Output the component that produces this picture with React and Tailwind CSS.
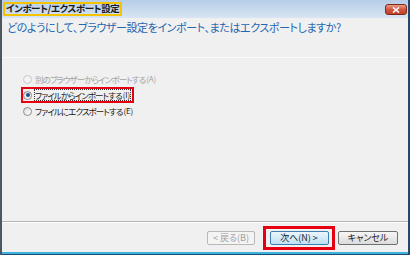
import React from 'react';

const jp = "font-['Noto_Sans_CJK_JP','Noto_Sans',sans-serif] [font-feature-settings:'palt']";

function Radio({ checked, disabled }) {
  return (
    <span
      className={`flex h-[9px] w-[9px] shrink-0 items-center justify-center rounded-full border ${
        disabled
          ? 'border-[#c8c8c8] bg-[#f4f4f4]'
          : 'border-[#8a8a8a] bg-gradient-to-br from-[#dcdcdc] to-[#ffffff]'
      }`}
    >
      {checked && <span className="h-[4px] w-[4px] rounded-full bg-[#1f4f86]" />}
    </span>
  );
}

function Option({ label, keyHint, checked, disabled, highlight }) {
  return (
    <div className="flex h-[16px] items-center">
      <div
        className={`flex h-[16px] items-center gap-[2px] border-2 pr-[1px] ${
          highlight ? 'border-[#e60012]' : 'border-transparent'
        }`}
      >
        <Radio checked={checked} disabled={disabled} />
        <span
          className={`flex items-center text-[8.5px] leading-[10px] ${
            disabled ? 'text-[#a3a3a3]' : 'text-[#1a1a1a]'
          } ${highlight ? 'border border-dotted border-[#333]' : 'border border-transparent'}`}
        >
          <span className="tracking-[-0.9px]">{label}</span>
          <span className="ml-[1px] text-[8px] tracking-[-0.2px]">({keyHint})</span>
        </span>
      </div>
    </div>
  );
}

export default function App() {
  return (
    <div
      className={`flex h-[255px] w-[410px] flex-col overflow-hidden border-l-2 border-r-2 border-l-[#4d5762] border-r-[#27486a] bg-[#f0f0f0] ${jp}`}
    >
      {/* title bar */}
      <div className="flex h-[18px] shrink-0 items-start justify-between bg-gradient-to-b from-[#b7cde7] to-[#d8e5f3] pl-[1px] pt-[2px]">
        <div className="flex h-[14px] items-center border-2 border-[#f5c400] px-[1px] text-[9.5px] font-bold leading-none tracking-[-0.4px] text-[#1a1a1a]">
          インポート/エクスポート設定
        </div>
        <div className="mr-[1px] mt-[2px] flex h-[11px] w-[22px] items-center justify-center rounded-[3px] border border-[#7d2a1d] bg-gradient-to-b from-[#e99a86] via-[#d2553c] to-[#c0422a]">
          <svg width="8" height="6" viewBox="0 0 8 6">
            <path d="M1 0.5 L7 5.5 M7 0.5 L1 5.5" stroke="#fff" strokeWidth="1.6" />
          </svg>
        </div>
      </div>

      {/* header */}
      <div className="h-[40px] shrink-0 border-b border-[#fafafa] pl-[5px] pt-[2px]">
        <div className="text-[11px] leading-[14px] tracking-[-0.4px] text-[#2466b0]">
          どのようにして、ブラウザー設定をインポート、またはエクスポートしますか?
        </div>
      </div>

      {/* options */}
      <div className="flex flex-1 flex-col pl-[19px] pt-[13px]">
        <Option label="別のブラウザーからインポートする" keyHint="A" disabled />
        <Option label="ファイルからインポートする" keyHint="I" checked highlight />
        <Option label="ファイルにエクスポートする" keyHint="E" />
      </div>

      {/* footer */}
      <div className="h-[1px] shrink-0 bg-[#b4b4b4]" />
      <div className="h-[1px] shrink-0 bg-[#ffffff]" />
      <div className="flex h-[29px] shrink-0 items-center justify-end pr-[10px]">
        <div className="flex h-[14px] w-[48px] items-center justify-center rounded-[2px] border border-[#b8b8b8] bg-[#f4f4f4] text-[9px] leading-none text-[#a0a0a0]">
          &lt; 戻る(B)
        </div>
        <div className="ml-[8px] flex h-[24px] w-[72px] items-center justify-center border-[3px] border-[#e60012]">
          <div className="flex h-[14px] w-[59px] items-center justify-center rounded-[2px] border border-[#3c7fb1] bg-gradient-to-b from-[#eaf6fd] to-[#bfe1f4] text-[9px] leading-none text-[#1a1a1a]">
            次へ(N) &gt;
          </div>
        </div>
        <div className="ml-[3px] flex h-[14px] w-[60px] items-center justify-center rounded-[2px] border border-[#707070] bg-gradient-to-b from-[#f6f6f6] to-[#dcdcdc] text-[9px] leading-none text-[#1a1a1a]">
          キャンセル
        </div>
      </div>
      <div className="h-[2px] shrink-0 bg-[#3cb2dc]" />
      <div className="h-[1px] shrink-0 bg-[#1d4c6e]" />
    </div>
  );
}
